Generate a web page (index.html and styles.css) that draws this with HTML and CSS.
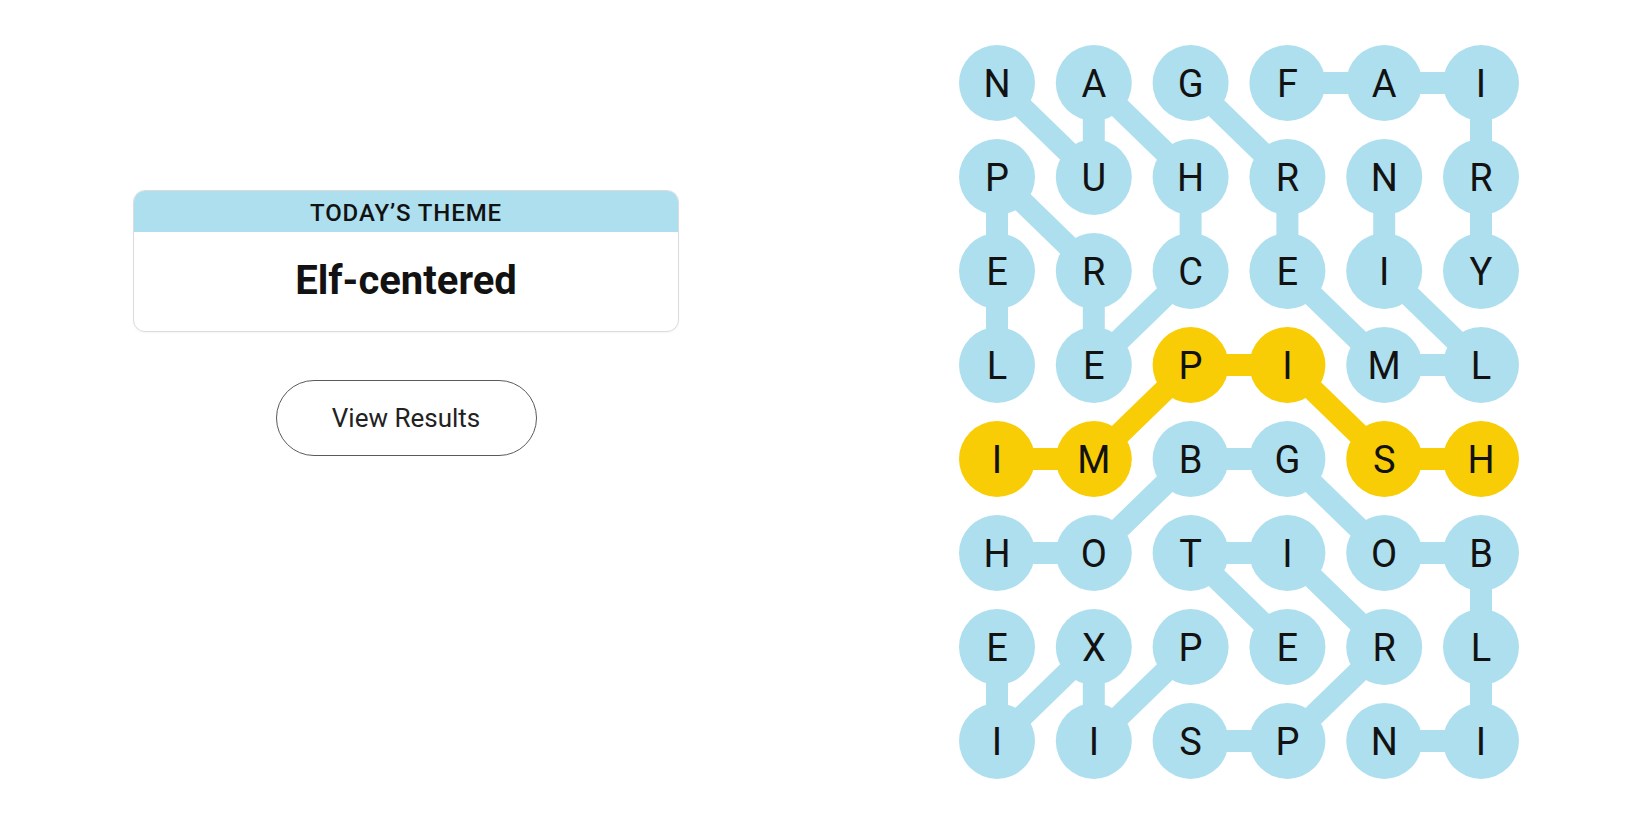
FILE: index.html
```html
<!DOCTYPE html>
<html lang="en">
<head>
<meta charset="utf-8">
<title>Strands</title>
<link rel="stylesheet" href="styles.css">
</head>
<body>
<main class="page">
  <section class="left">
    <div class="card">
      <div class="card-head">TODAY’S THEME</div>
      <div class="card-body">Elf-centered</div>
    </div>
    <button class="btn">View Results</button>
  </section>
  <section class="board">
    <svg class="grid" width="600" height="780" viewBox="0 0 600 780" xmlns="http://www.w3.org/2000/svg">
      <g class="links">
        <polyline class="link" points="57,340 57,246 57,152 153.8,246 153.8,340 250.6,246 250.6,152 153.8,58 153.8,152 57,58"/>
        <polyline class="link" points="250.6,58 347.4,152 347.4,246 444.2,340 541,340 444.2,246 444.2,152"/>
        <polyline class="link" points="347.4,58 444.2,58 541,58 541,152 541,246"/>
        <polyline class="link" points="57,528 153.8,528 250.6,434 347.4,434 444.2,528 541,528 541,622 541,716 444.2,716"/>
        <polyline class="link" points="250.6,622 153.8,716 153.8,622 57,716 57,622"/>
        <polyline class="link" points="250.6,716 347.4,716 444.2,622 347.4,528 250.6,528 347.4,622"/>
        <polyline class="link gold" points="57,434 153.8,434 250.6,340 347.4,340 444.2,434 541,434"/>
      </g>
      <g class="dots">
        <circle cx="57" cy="58" r="38"/><circle cx="153.8" cy="58" r="38"/><circle cx="250.6" cy="58" r="38"/><circle cx="347.4" cy="58" r="38"/><circle cx="444.2" cy="58" r="38"/><circle cx="541" cy="58" r="38"/>
        <circle cx="57" cy="152" r="38"/><circle cx="153.8" cy="152" r="38"/><circle cx="250.6" cy="152" r="38"/><circle cx="347.4" cy="152" r="38"/><circle cx="444.2" cy="152" r="38"/><circle cx="541" cy="152" r="38"/>
        <circle cx="57" cy="246" r="38"/><circle cx="153.8" cy="246" r="38"/><circle cx="250.6" cy="246" r="38"/><circle cx="347.4" cy="246" r="38"/><circle cx="444.2" cy="246" r="38"/><circle cx="541" cy="246" r="38"/>
        <circle cx="57" cy="340" r="38"/><circle cx="153.8" cy="340" r="38"/><circle class="gold" cx="250.6" cy="340" r="38"/><circle class="gold" cx="347.4" cy="340" r="38"/><circle cx="444.2" cy="340" r="38"/><circle cx="541" cy="340" r="38"/>
        <circle class="gold" cx="57" cy="434" r="38"/><circle class="gold" cx="153.8" cy="434" r="38"/><circle cx="250.6" cy="434" r="38"/><circle cx="347.4" cy="434" r="38"/><circle class="gold" cx="444.2" cy="434" r="38"/><circle class="gold" cx="541" cy="434" r="38"/>
        <circle cx="57" cy="528" r="38"/><circle cx="153.8" cy="528" r="38"/><circle cx="250.6" cy="528" r="38"/><circle cx="347.4" cy="528" r="38"/><circle cx="444.2" cy="528" r="38"/><circle cx="541" cy="528" r="38"/>
        <circle cx="57" cy="622" r="38"/><circle cx="153.8" cy="622" r="38"/><circle cx="250.6" cy="622" r="38"/><circle cx="347.4" cy="622" r="38"/><circle cx="444.2" cy="622" r="38"/><circle cx="541" cy="622" r="38"/>
        <circle cx="57" cy="716" r="38"/><circle cx="153.8" cy="716" r="38"/><circle cx="250.6" cy="716" r="38"/><circle cx="347.4" cy="716" r="38"/><circle cx="444.2" cy="716" r="38"/><circle cx="541" cy="716" r="38"/>
      </g>
      <g class="letters">
        <text x="57" y="72">N</text><text x="153.8" y="72">A</text><text x="250.6" y="72">G</text><text x="347.4" y="72">F</text><text x="444.2" y="72">A</text><text x="541" y="72">I</text>
        <text x="57" y="166">P</text><text x="153.8" y="166">U</text><text x="250.6" y="166">H</text><text x="347.4" y="166">R</text><text x="444.2" y="166">N</text><text x="541" y="166">R</text>
        <text x="57" y="260">E</text><text x="153.8" y="260">R</text><text x="250.6" y="260">C</text><text x="347.4" y="260">E</text><text x="444.2" y="260">I</text><text x="541" y="260">Y</text>
        <text x="57" y="354">L</text><text x="153.8" y="354">E</text><text x="250.6" y="354">P</text><text x="347.4" y="354">I</text><text x="444.2" y="354">M</text><text x="541" y="354">L</text>
        <text x="57" y="448">I</text><text x="153.8" y="448">M</text><text x="250.6" y="448">B</text><text x="347.4" y="448">G</text><text x="444.2" y="448">S</text><text x="541" y="448">H</text>
        <text x="57" y="542">H</text><text x="153.8" y="542">O</text><text x="250.6" y="542">T</text><text x="347.4" y="542">I</text><text x="444.2" y="542">O</text><text x="541" y="542">B</text>
        <text x="57" y="636">E</text><text x="153.8" y="636">X</text><text x="250.6" y="636">P</text><text x="347.4" y="636">E</text><text x="444.2" y="636">R</text><text x="541" y="636">L</text>
        <text x="57" y="730">I</text><text x="153.8" y="730">I</text><text x="250.6" y="730">S</text><text x="347.4" y="730">P</text><text x="444.2" y="730">N</text><text x="541" y="730">I</text>
      </g>
    </svg>
  </section>
</main>
</body>
</html>
```

FILE: styles.css
```css
html, body {
  margin: 0;
  padding: 0;
  background: #ffffff;
}

body {
  font-family: Roboto, "Liberation Sans", Arial, sans-serif;
  color: #121212;
}

.page {
  display: flex;
  width: 1650px;
  height: 825px;
  overflow: hidden;
}

.left {
  width: 812px;
  flex: none;
  display: flex;
  flex-direction: column;
  align-items: center;
  padding-top: 190px;
  box-sizing: border-box;
}

.card {
  width: 546px;
  box-sizing: border-box;
  border: 1px solid #dcdcdc;
  border-radius: 12px;
  overflow: hidden;
  background: #fff;
  box-shadow: 0 1px 2px rgba(0, 0, 0, 0.04);
}

.card-head {
  height: 41px;
  background: #aedfee;
  display: flex;
  align-items: center;
  justify-content: center;
  font-size: 24px;
  font-weight: 500;
  letter-spacing: 0.9px;
  color: #121212;
  padding-top: 2px;
  box-sizing: border-box;
}

.card-body {
  height: 99px;
  display: flex;
  align-items: center;
  justify-content: center;
  font-size: 40px;
  font-weight: 700;
  color: #121212;
  padding-bottom: 2px;
  box-sizing: border-box;
}

.btn {
  margin-top: 48px;
  width: 261px;
  height: 76px;
  border: 1px solid #5a5a5a;
  border-radius: 38px;
  background: #fff;
  font-family: Roboto, "Liberation Sans", Arial, sans-serif;
  font-size: 26px;
  color: #222;
  padding: 0;
  cursor: pointer;
}

.board {
  flex: none;
  margin-left: 128px;
  margin-top: 25px;
}

.grid {
  display: block;
}

.link {
  fill: none;
  stroke: #aedfee;
  stroke-width: 22;
  stroke-linejoin: round;
}

.link.gold {
  stroke: #f8cd05;
}

.dots circle {
  fill: #aedfee;
}

.dots circle.gold {
  fill: #f8cd05;
}

.letters text {
  font-family: Roboto, "Liberation Sans", Arial, sans-serif;
  font-size: 38px;
  font-weight: 400;
  fill: #121212;
  text-anchor: middle;
}
```
